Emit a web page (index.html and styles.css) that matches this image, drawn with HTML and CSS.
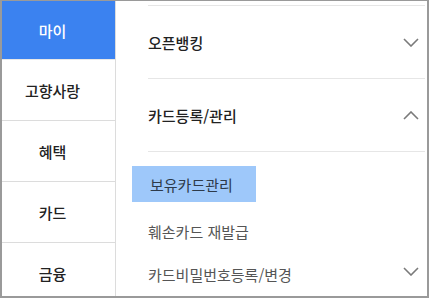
FILE: index.html
```html
<!DOCTYPE html>
<html lang="ko">
<head>
<meta charset="utf-8">
<link rel="stylesheet" href="styles.css">
</head>
<body>
<div class="frame">
  <nav class="side">
    <div class="side-item active">마이</div>
    <div class="side-item">고향사랑</div>
    <div class="side-item">혜택</div>
    <div class="side-item">카드</div>
    <div class="side-item">금융</div>
  </nav>
  <main class="main">
    <div class="group">
      <div class="head">
        <span>오픈뱅킹</span>
        <svg class="chev" viewBox="0 0 16 9" width="16" height="9"><path d="M1 1l7 7 7-7" fill="none" stroke="#7a7a7a" stroke-width="1.6"/></svg>
      </div>
    </div>
    <div class="group">
      <div class="head">
        <span>카드등록/관리</span>
        <svg class="chev" viewBox="0 0 16 9" width="16" height="9"><path d="M1 8l7-7 7 7" fill="none" stroke="#7a7a7a" stroke-width="1.6"/></svg>
      </div>
    </div>
    <ul class="sub">
      <li class="sub-item selected"><span>보유카드관리</span></li>
      <li class="sub-item"><span>훼손카드 재발급</span></li>
      <li class="sub-item"><span>카드비밀번호등록/변경</span>
        <svg class="chev chev-up" viewBox="0 0 16 9" width="16" height="9"><path d="M1 1l7 7 7-7" fill="none" stroke="#7a7a7a" stroke-width="1.6"/></svg>
      </li>
    </ul>
  </main>
</div>
</body>
</html>
```
FILE: styles.css
```css
html, body {
  margin: 0;
  padding: 0;
  background: #fff;
}
body {
  font-family: "Noto Sans CJK KR", "Noto Sans", sans-serif;
}
.frame {
  box-sizing: border-box;
  width: 429px;
  height: 298px;
  border: 2px solid #9a9a9a;
  border-top-width: 1px;
  display: flex;
  overflow: hidden;
}
.side {
  width: 113px;
  flex: none;
  border-right: 1px solid #dcdcdc;
  display: flex;
  flex-direction: column;
}
.side-item {
  flex: none;
  height: 60px;
  border-bottom: 1px solid #dcdcdc;
  display: flex;
  align-items: center;
  justify-content: center;
  padding-right: 12px;
  font-size: 15px;
  font-weight: 500;
  color: #222;
}
.side-item.active {
  background: #3b82f0;
  color: #fff;
  height: 58px;
  margin-top: -1px;
  padding-top: 1px;
  border-bottom: 1px solid #e8e8e8;
}
.main {
  flex: 1;
  padding: 4px 2px 0 32px;
}
.group {
  border-top: 1px solid #e6e6e6;
}
.head {
  height: 72px;
  display: flex;
  align-items: center;
  justify-content: space-between;
  padding-right: 6px;
  font-size: 15px;
  font-weight: 500;
  color: #222;
}
.sub {
  list-style: none;
  margin: 0;
  padding: 0;
  border-top: 1px solid #e6e6e6;
}
.sub-item {
  height: 43px;
  display: flex;
  align-items: center;
  justify-content: space-between;
  padding-right: 6px;
  font-size: 15px;
  color: #555;
}
.sub-item.selected {
  margin: 14px 0 8px -16px;
  height: 36px;
  width: 124px;
  box-sizing: border-box;
  padding: 0 0 0 18px;
  background: #9ec8fa;
  color: #2d3a4a;
}
.chev {
  display: block;
  flex: none;
}
.chev-up {
  margin-bottom: 6px;
}
```
